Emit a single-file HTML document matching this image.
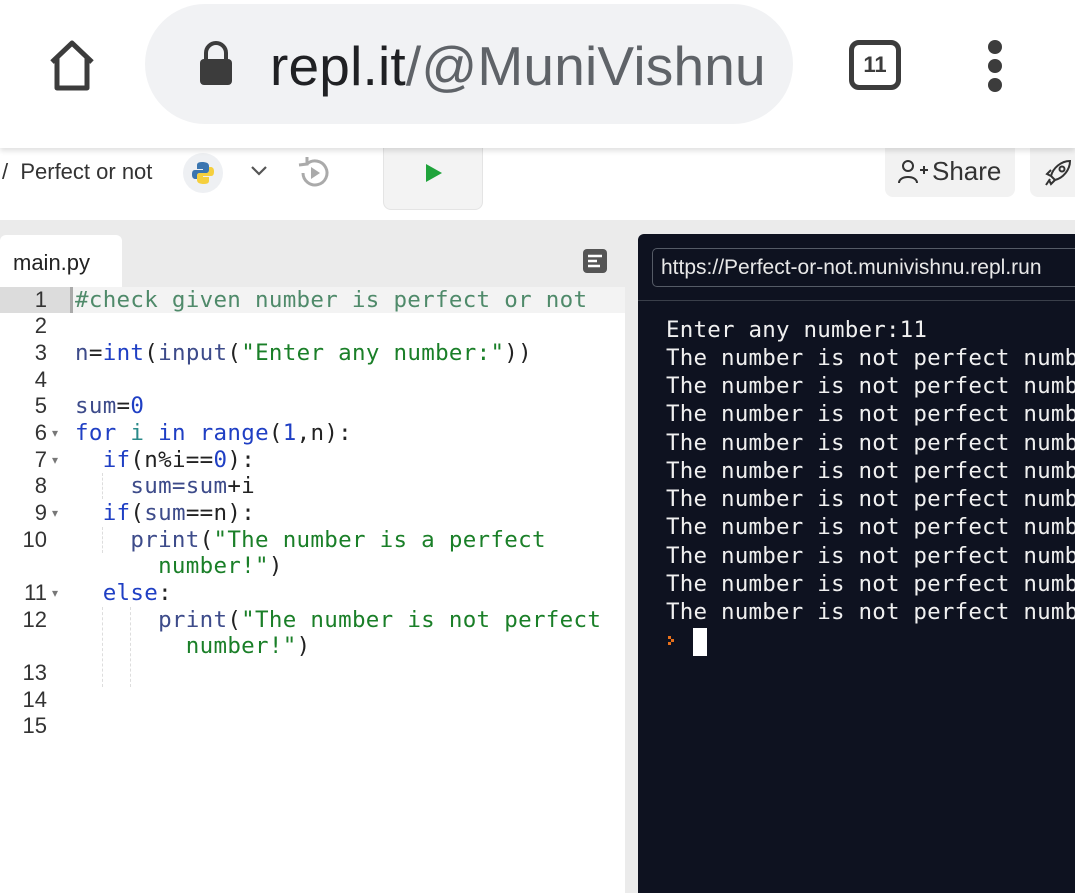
<!DOCTYPE html>
<html><head><meta charset="utf-8"><style>
*{margin:0;padding:0;box-sizing:border-box}
body{width:1075px;height:893px;overflow:hidden;background:#ebebeb;font-family:"Liberation Sans",sans-serif;position:relative}
.abs{position:absolute}
.mono{font-family:"DejaVu Sans Mono","Liberation Mono",monospace}
#bar{left:0;top:0;width:1075px;height:148px;background:#fff;box-shadow:0 3px 5px rgba(0,0,0,.12);z-index:2}
#hdr{left:0;top:148px;width:1075px;height:72px;background:#fff}
.code{left:0;top:287px;width:625px;height:606px;background:#fff}
.ln{position:absolute;left:0;width:47px;text-align:right;font-size:22px;color:#333;font-family:"Liberation Sans",sans-serif}
.cl{position:absolute;left:75px;font-size:22.5px;white-space:pre;letter-spacing:0.3px}
.k{color:#1f3fc4}.s{color:#1a7f28}.c{color:#4f8a6a}.v{color:#3d4b8a}.p{color:#222}
.term{left:638px;top:234px;width:437px;height:659px;background:#0e1220;border-radius:6px 0 0 0}
.tl{position:absolute;left:666px;font-size:22.5px;color:#f0f0f0;white-space:pre;letter-spacing:0.2px}
.arrow{position:absolute;left:52px;font-size:12px;color:#777}
</style></head><body>
<div id="bar" class="abs">
 <svg class="abs" style="left:44px;top:38px" width="56" height="54" viewBox="0 0 56 54"><path d="M8 24 L28 5 L48 24 M13 20 V50 H43 V20" fill="none" stroke="#3c3c3c" stroke-width="5" stroke-linejoin="round"/></svg>
 <div class="abs" style="left:145px;top:4px;width:648px;height:120px;background:#f1f2f4;border-radius:60px"></div>
 <svg class="abs" style="left:196px;top:40px" width="40" height="46" viewBox="0 0 40 46"><path d="M10 20 V13 a10 10 0 0 1 20 0 V20" fill="none" stroke="#3c3c3c" stroke-width="4"/><rect x="4" y="19" width="32" height="26" rx="4" fill="#3c3c3c"/></svg>
 <div class="abs" style="left:270px;top:34px;font-size:55px;color:#202124;letter-spacing:0.2px">repl.it<span style="color:#5f6368">/@MuniVishnu</span></div>
 <div class="abs" style="left:849px;top:40px;width:52px;height:50px;border:5px solid #3c3c3c;border-radius:10px;font-size:22px;font-weight:bold;text-align:center;line-height:40px;color:#3c3c3c">11</div>
 <div class="abs" style="left:988px;top:40px;width:14px;height:14px;border-radius:7px;background:#3c3c3c"></div>
 <div class="abs" style="left:988px;top:59px;width:14px;height:14px;border-radius:7px;background:#3c3c3c"></div>
 <div class="abs" style="left:988px;top:78px;width:14px;height:14px;border-radius:7px;background:#3c3c3c"></div>
</div>
<div id="hdr" class="abs">
 <div class="abs" style="left:2px;top:11px;font-size:22px;color:#333">/ &nbsp;Perfect or not</div>
 <div class="abs" style="left:183px;top:5px;width:40px;height:40px;border-radius:20px;background:#eef0f3"></div>
 <svg class="abs" style="left:190px;top:12px" width="26" height="26" viewBox="0 0 26 26"><path d="M12 2 C7 2 7 4 7 6 V9 H13 V10 H5 C2 10 2 13 2 15 C2 18 4 19 5 19 H7 V16 C7 14 8 13 10 13 H16 C18 13 19 12 19 10 V6 C19 3 16 2 12 2Z" fill="#3a75b0"/><path d="M14 24 C19 24 19 22 19 20 V17 H13 V16 H21 C24 16 24 13 24 11 C24 8 22 7 21 7 H19 V10 C19 12 18 13 16 13 H10 C8 13 7 14 7 16 V20 C7 23 10 24 14 24Z" fill="#f5cf3e"/></svg>
 <svg class="abs" style="left:250px;top:17px" width="18" height="12" viewBox="0 0 18 12"><path d="M2 2 L9 9 L16 2" fill="none" stroke="#555" stroke-width="2.2"/></svg>
 <svg class="abs" style="left:295px;top:7px" width="38" height="36" viewBox="0 0 38 36"><path d="M8 18 A12 12 0 1 0 12 9" fill="none" stroke="#aaa" stroke-width="3"/><path d="M4 10 L12 9 L12 2" fill="none" stroke="#aaa" stroke-width="3"/><path d="M16 12 L25 18 L16 24Z" fill="#aaa"/></svg>
 <div class="abs" style="left:383px;top:-2px;width:100px;height:64px;background:#f3f3f3;border:1px solid #e4e4e4;border-radius:0 0 8px 8px"></div>
 <svg class="abs" style="left:424px;top:15px" width="20" height="20" viewBox="0 0 20 20"><path d="M2 1 L18 10 L2 19Z" fill="#1fa33b"/></svg>
 <div class="abs" style="left:885px;top:-2px;width:130px;height:51px;background:#f2f2f2;border-radius:0 0 8px 8px"></div>
 <svg class="abs" style="left:897px;top:11px" width="32" height="26" viewBox="0 0 32 26"><circle cx="11" cy="7" r="5" fill="none" stroke="#333" stroke-width="2"/><path d="M2 24 C2 16 20 16 20 24" fill="none" stroke="#333" stroke-width="2"/><path d="M23 11 H31 M27 7 V15" stroke="#333" stroke-width="2"/></svg>
 <div class="abs" style="left:932px;top:8px;font-size:26px;color:#333">Share</div>
 <div class="abs" style="left:1030px;top:-2px;width:60px;height:51px;background:#f2f2f2;border-radius:0 0 0 8px"></div>
 <svg class="abs" style="left:1043px;top:10px" width="30" height="30" viewBox="0 0 30 30"><path d="M8 18 C10 10 18 3 27 3 C27 12 20 20 12 22Z M12 22 L8 26 L6 22 M8 18 L4 16 L8 12 M7 21 L3 27" fill="none" stroke="#333" stroke-width="2"/><circle cx="19" cy="11" r="2.5" fill="none" stroke="#333" stroke-width="2"/></svg>
</div>
<div class="abs" style="left:0;top:235px;width:122px;height:55px;background:#fff;border-radius:6px 6px 0 0;font-size:22px;color:#222;padding:15px 0 0 13px">main.py</div>
<svg class="abs" style="left:583px;top:249px" width="24" height="24" viewBox="0 0 24 24"><rect x="0" y="0" width="24" height="24" rx="4" fill="#555"/><path d="M5 7 H19 M5 12 H14 M5 17 H17" stroke="#fff" stroke-width="2.5"/></svg>
<div class="abs code">
 <div class="abs" style="left:0;top:0;width:70px;height:26px;background:#dcdcdc"></div>
 <div class="abs" style="left:70px;top:0;width:555px;height:26px;background:#f3f3f3;border-left:3px solid #aaa"></div>
 <div class="abs" style="left:102px;top:186px;border-left:1px dashed #ddd;height:26px"></div>
 <div class="abs" style="left:102px;top:240px;border-left:1px dashed #ddd;height:26px"></div>
 <div class="abs" style="left:102px;top:320px;border-left:1px dashed #ddd;height:80px"></div>
 <div class="abs" style="left:130px;top:320px;border-left:1px dashed #ddd;height:80px"></div>
</div>
<div class="abs" style="left:0;top:287px;width:625px;height:606px">
 <div class="ln" style="top:0">1</div>
 <div class="ln" style="top:26px">2</div>
 <div class="ln" style="top:53px">3</div>
 <div class="ln" style="top:80px">4</div>
 <div class="ln" style="top:106px">5</div>
 <div class="ln" style="top:133px">6</div><div class="arrow" style="top:139px">▾</div>
 <div class="ln" style="top:160px">7</div><div class="arrow" style="top:166px">▾</div>
 <div class="ln" style="top:186px">8</div>
 <div class="ln" style="top:213px">9</div><div class="arrow" style="top:219px">▾</div>
 <div class="ln" style="top:240px">10</div>
 <div class="ln" style="top:293px">11</div><div class="arrow" style="top:299px">▾</div>
 <div class="ln" style="top:320px">12</div>
 <div class="ln" style="top:373px">13</div>
 <div class="ln" style="top:400px">14</div>
 <div class="ln" style="top:426px">15</div>
 <div class="cl mono c" style="top:0">#check given number is perfect or not</div>
 <div class="cl mono" style="top:53px"><span class="v">n</span><span class="p">=</span><span class="k">int</span><span class="p">(</span><span class="v">input</span><span class="p">(</span><span class="s">"Enter any number:"</span><span class="p">))</span></div>
 <div class="cl mono" style="top:106px"><span class="v">sum</span><span class="p">=</span><span class="k">0</span></div>
 <div class="cl mono" style="top:133px"><span class="k">for</span> <span class="v" style="color:#2a8a8a">i</span> <span class="k">in</span> <span class="k">range</span><span class="p">(</span><span class="k">1</span><span class="p">,n):</span></div>
 <div class="cl mono" style="top:160px">  <span class="k">if</span><span class="p">(n%i==</span><span class="k">0</span><span class="p">):</span></div>
 <div class="cl mono" style="top:186px">    <span class="v">sum=sum</span><span class="p">+i</span></div>
 <div class="cl mono" style="top:213px">  <span class="k">if</span><span class="p">(</span><span class="v">sum</span><span class="p">==n):</span></div>
 <div class="cl mono" style="top:240px">    <span class="v">print</span><span class="p">(</span><span class="s">"The number is a perfect</span></div>
 <div class="cl mono" style="top:266px">      <span class="s">number!"</span><span class="p">)</span></div>
 <div class="cl mono" style="top:293px">  <span class="k">else</span><span class="p">:</span></div>
 <div class="cl mono" style="top:320px">      <span class="v">print</span><span class="p">(</span><span class="s">"The number is not perfect</span></div>
 <div class="cl mono" style="top:346px">        <span class="s">number!"</span><span class="p">)</span></div>
</div>
<div class="abs term"></div>
<div class="abs" style="left:652px;top:248px;width:440px;height:39px;border:1px solid #555b66;border-radius:5px;font-size:21px;color:#e8e8e8;padding:7px 0 0 8px;white-space:nowrap">https://Perfect-or-not.munivishnu.repl.run</div>
<div class="abs" style="left:638px;top:300px;width:437px;height:1px;background:#3a3f4a"></div>
<div class="tl mono" style="top:317px">Enter any number:11</div>
<div class="tl mono" style="top:345px">The number is not perfect number!</div>
<div class="tl mono" style="top:373px">The number is not perfect number!</div>
<div class="tl mono" style="top:401px">The number is not perfect number!</div>
<div class="tl mono" style="top:430px">The number is not perfect number!</div>
<div class="tl mono" style="top:458px">The number is not perfect number!</div>
<div class="tl mono" style="top:486px">The number is not perfect number!</div>
<div class="tl mono" style="top:514px">The number is not perfect number!</div>
<div class="tl mono" style="top:543px">The number is not perfect number!</div>
<div class="tl mono" style="top:571px">The number is not perfect number!</div>
<div class="tl mono" style="top:599px">The number is not perfect number!</div>
<svg class="abs" style="left:668px;top:636px" width="9" height="12" viewBox="0 0 9 12"><rect x="0" y="0" width="3" height="3" fill="#e8701a"/><rect x="3" y="3" width="3" height="3" fill="#e8701a"/><rect x="0" y="6" width="3" height="3" fill="#e8701a"/><rect x="3" y="3" width="3" height="6" fill="#e8701a" opacity="0"/></svg>
<div class="abs" style="left:693px;top:628px;width:14px;height:28px;background:#fff"></div>
</body></html>
